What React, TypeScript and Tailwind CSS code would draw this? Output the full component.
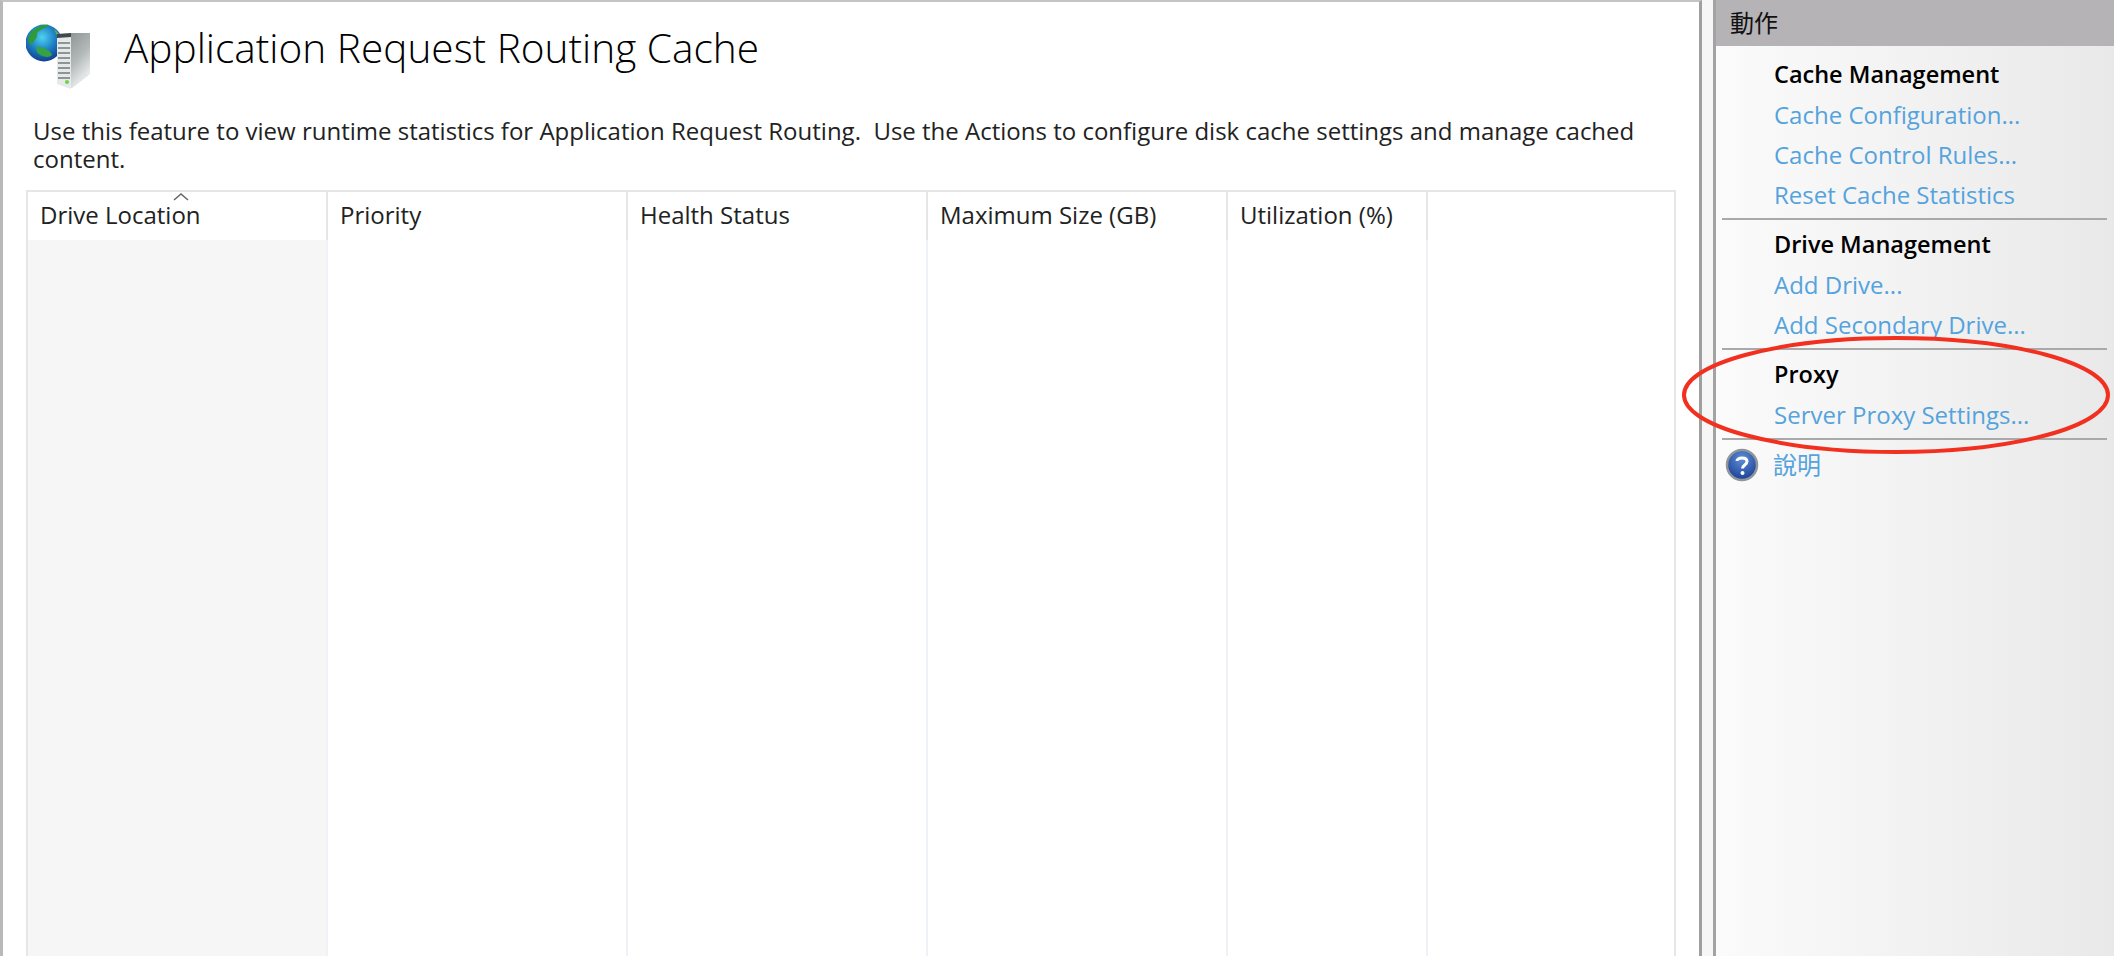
const font = "font-['Open_Sans','Noto_Sans_CJK_TC',sans-serif]";

function RoutingIcon() {
  return (
    <svg width="70" height="68" viewBox="0 0 70 68" className="shrink-0">
      <defs>
        <radialGradient id="g1" cx="45%" cy="35%" r="65%">
          <stop offset="0%" stopColor="#4fd2f0" />
          <stop offset="55%" stopColor="#1c7fc4" />
          <stop offset="100%" stopColor="#123f8c" />
        </radialGradient>
        <linearGradient id="s1" x1="0" y1="0" x2="0.4" y2="1">
          <stop offset="0%" stopColor="#8e9494" />
          <stop offset="55%" stopColor="#b4baba" />
          <stop offset="100%" stopColor="#eef0f0" />
        </linearGradient>
      </defs>
      <circle cx="18" cy="19" r="18.5" fill="url(#g1)" />
      <path d="M3 12 C7 4 16 0 23 1 C19 5 14 5 11 9 C12 14 8 16 6 21 C3 20 1 16 3 12Z" fill="#2f9a3c" />
      <path d="M10 23 C16 22 24 26 26 31 C22 35 14 32 11 28Z" fill="#35a246" />
      <path d="M28 5 C32 8 35 12 36 17 C32 14 30 10 28 5Z" fill="#6bb04a" />
      <path d="M44 9 L64 9 L64 50 L46 64 L44 64Z" fill="url(#s1)" />
      <path d="M31 10 L45 9 L45 65 L31 60Z" fill="#e6e9e9" />
      <path d="M31 10 L45 9 L45 13 L31 14Z" fill="#3f4a4c" />
      <path d="M32 19 H44 M32 24 H44 M32 29 H44 M32 34 H44 M32 39 H44 M32 44 H44 M32 49 H44 M32 54 H44" stroke="#8d9595" strokeWidth="2" />
      <circle cx="41" cy="58" r="2" fill="#6fd04a" />
      <path d="M48 60 L62 49" stroke="#dfe3e3" strokeWidth="4" strokeDasharray="2 1.5" />
    </svg>
  );
}

function HelpIcon() {
  return (
    <svg width="34" height="34" viewBox="0 0 34 34" className="shrink-0">
      <defs>
        <radialGradient id="h1" cx="50%" cy="30%" r="75%">
          <stop offset="0%" stopColor="#5d8fd8" />
          <stop offset="100%" stopColor="#17398f" />
        </radialGradient>
      </defs>
      <circle cx="17" cy="17" r="15" fill="url(#h1)" stroke="#8f959c" strokeWidth="2.5" />
      <path d="M12 13 C12 9 22 9 22 13.5 C22 17 17.5 17 17.5 20.5" fill="none" stroke="#fff" strokeWidth="3" />
      <circle cx="17.5" cy="25" r="2" fill="#fff" />
    </svg>
  );
}

function Col({ w, label, first, last, sort }: { w: string; label?: string; first?: boolean; last?: boolean; sort?: boolean }) {
  return (
    <div className={`${w} ${last ? "" : "border-r-2 border-r-[#eef2f6]"} relative flex flex-col`}>
      <div className={`h-[48px] flex items-center pl-3 pb-[2px] text-[24px] text-[#222] ${last ? "" : "border-r-2 border-r-[#e6e6e6] -mr-[2px]"}`}>
        {label}
      </div>
      {sort && (
        <svg width="16" height="8" viewBox="0 0 16 8" className="absolute left-[145px] top-[1px]">
          <path d="M1 7 L8 1 L15 7" fill="none" stroke="#666" strokeWidth="1.5" />
        </svg>
      )}
      <div className={`flex-1 ${first ? "bg-[#f6f6f7]" : "bg-white"}`} />
    </div>
  );
}

function Head({ children }: { children: string }) {
  return <div className="h-[40px] pl-[52px] flex items-center text-[23.5px] font-semibold text-black">{children}</div>;
}

function Link({ children }: { children: string }) {
  return <div className="h-[40px] pl-[52px] flex items-center text-[24px] text-[#55a3dd]">{children}</div>;
}

export default function App() {
  return (
    <div className={`${font} relative flex h-[956px] w-[2114px] overflow-hidden bg-white`}>
      <main className="w-[1702px] shrink-0 flex flex-col border-l-[3px] border-l-[#b9b9b9] border-t-2 border-t-[#c4c4c4] border-r-[3px] border-r-[#9f9f9f] bg-white">
        <header className="flex items-start pl-[23px] pt-[22px] h-[115px]">
          <RoutingIcon />
          <h1 className="ml-[28px] mt-[-1px] text-[40.6px] font-light leading-[50px] text-black whitespace-nowrap">Application Request Routing Cache</h1>
        </header>
        <p className="ml-[30px] w-[1620px] h-[73px] text-[24px] leading-[28px] text-[#222]">
          Use this feature to view runtime statistics for Application Request Routing.&nbsp; Use the Actions to configure disk cache settings and manage cached content.
        </p>
        <div className="ml-[23px] w-[1650px] flex-1 flex border-2 border-b-0 border-[#e6e6e6]">
          <Col w="w-[300px]" label="Drive Location" first sort />
          <Col w="w-[300px]" label="Priority" />
          <Col w="w-[300px]" label="Health Status" />
          <Col w="w-[300px]" label="Maximum Size (GB)" />
          <Col w="w-[200px]" label="Utilization (%)" />
          <Col w="flex-1" last />
        </div>
      </main>
      <div className="w-[11px] shrink-0 bg-[#f6f6f6]" />
      <aside className="flex-1 flex flex-col border-l-[3px] border-l-[#a3a3a3] bg-gradient-to-r from-[#fbfbfb] to-[#e9e9e9]">
        <div className="h-[46px] bg-[#b5b3b6] flex items-center pl-[14px] text-[24px] text-[#111]">動作</div>
        <div className="ml-[6px] mr-[7px] border-b-2 border-b-[#a9a9a9] h-[174px] pt-[9px]">
          <Head>Cache Management</Head>
          <Link>Cache Configuration...</Link>
          <Link>Cache Control Rules...</Link>
          <Link>Reset Cache Statistics</Link>
        </div>
        <div className="ml-[6px] mr-[7px] border-b-2 border-b-[#a9a9a9] h-[130px] pt-[5px]">
          <Head>Drive Management</Head>
          <Link>Add Drive...</Link>
          <Link>Add Secondary Drive...</Link>
        </div>
        <div className="ml-[6px] mr-[7px] border-b-2 border-b-[#a9a9a9] h-[90px] pt-[5px]">
          <Head>Proxy</Head>
          <Link>Server Proxy Settings...</Link>
        </div>
        <div className="flex items-center h-[50px] pl-[9px] gap-[14px] text-[24px] text-[#55a3dd]">
          <HelpIcon />
          <span>說明</span>
        </div>
      </aside>
      <svg width="440" height="124" viewBox="0 0 440 124" className="absolute left-[1680px] top-[333px] pointer-events-none">
        <ellipse cx="216" cy="62" rx="212" ry="57" fill="none" stroke="#f2301f" strokeWidth="4" />
      </svg>
    </div>
  );
}
